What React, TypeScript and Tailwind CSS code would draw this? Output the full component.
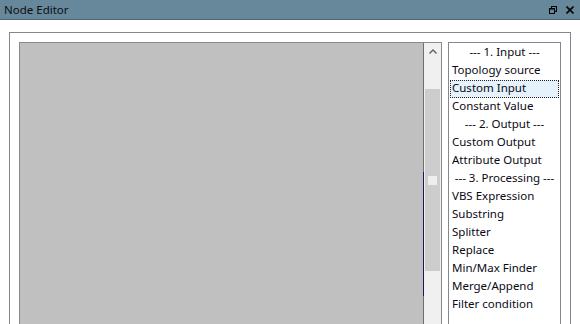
import React from "react";

const items: { label: string; header?: boolean; selected?: boolean }[] = [
  { label: "--- 1. Input ---", header: true },
  { label: "Topology source" },
  { label: "Custom Input", selected: true },
  { label: "Constant Value" },
  { label: "--- 2. Output ---", header: true },
  { label: "Custom Output" },
  { label: "Attribute Output" },
  { label: "--- 3. Processing ---", header: true },
  { label: "VBS Expression" },
  { label: "Substring" },
  { label: "Splitter" },
  { label: "Replace" },
  { label: "Min/Max Finder" },
  { label: "Merge/Append" },
  { label: "Filter condition" },
];

export default function App() {
  return (
    <div
      className="w-[580px] h-[324px] overflow-hidden bg-white flex flex-col text-[12px] text-black"
      style={{ fontFamily: '"Noto Sans", "Open Sans", sans-serif' }}
    >
      {/* Title bar */}
      <div className="h-[20px] shrink-0 bg-[#67879a] border-b border-[#4d6778] flex items-center pl-[4px] pr-[6px]">
        <span className="leading-[19px] text-[11.5px] text-[#0a0f12]">Node Editor</span>
        <div className="ml-auto flex items-center gap-[9px]">
          <svg width="8" height="8" viewBox="0 0 8 8" className="block">
            <rect x="2.5" y="0.5" width="5" height="5" fill="none" stroke="#000" strokeWidth="1" />
            <rect x="0.5" y="2.5" width="5" height="5" fill="#67879a" stroke="#000" strokeWidth="1" />
            <line x1="0" y1="3" x2="6" y2="3" stroke="#000" strokeWidth="1" />
          </svg>
          <svg width="8" height="8" viewBox="0 0 8 8" className="block">
            <path d="M0.5 0.5 L7.5 7.5 M7.5 0.5 L0.5 7.5" stroke="#000" strokeWidth="1.6" />
          </svg>
        </div>
      </div>

      {/* Body */}
      <div className="flex-1 min-h-0 pt-[12px] px-[9px]">
        <div className="h-full border-t border-x border-[#828790] pt-[9px] px-[9px] flex gap-[6px]">
          {/* Canvas with scrollbar */}
          <div className="w-[423px] h-full border-t border-x border-[#8a8a8a] flex">
            <div className="flex-1 bg-[#c0c0c0] border-r border-[#6e6e6e] relative">
              <div className="absolute right-[-1px] top-[129px] w-[1px] h-[124px] bg-[#1a1a5a]" />
            </div>
            <div className="w-[17px] bg-[#f0f0f0] flex flex-col">
              <div className="h-[17px] flex items-center justify-center">
                <svg width="8" height="5" viewBox="0 0 8 5">
                  <path d="M0.5 4.5 L4 1 L7.5 4.5" fill="none" stroke="#606060" strokeWidth="1.4" />
                </svg>
              </div>
              <div className="h-[29px]" />
              <div className="h-[182px] mx-[1px] bg-[#cdcdcd] flex flex-col items-center">
                <div className="h-[87px]" />
                <div className="w-[9px] h-[9px] bg-[#eeeeee]" />
              </div>
            </div>
          </div>

          {/* List box */}
          <div className="w-[113px] h-full border-t border-x border-[#828790] bg-white p-[1px]">
            {items.map((it) => (
              <div
                key={it.label}
                className={
                  "h-[18px] leading-[14px] text-[11.5px] text-[#0a0a14] whitespace-nowrap border " +
                  (it.selected
                    ? "bg-[#e5f1fb] border-dotted border-[#222]"
                    : "border-transparent") +
                  (it.header ? " text-center" : " pl-[1px]")
                }
              >
                {it.label}
              </div>
            ))}
          </div>
        </div>
      </div>
    </div>
  );
}
